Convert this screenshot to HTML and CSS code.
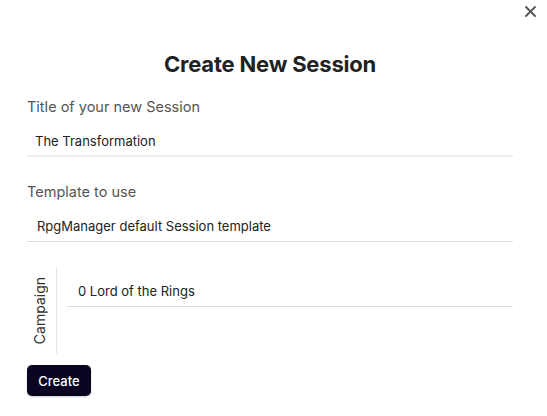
FILE: index.html
```html
<!DOCTYPE html>
<html>
<head>
<meta charset="utf-8">
<link rel="stylesheet" href="styles.css">
</head>
<body>
<div class="modal">
  <button class="close" aria-label="Close">
    <svg width="11" height="11" viewBox="0 0 11 11"><path d="M1 1L10 10M10 1L1 10" stroke="#555" stroke-width="1.8" stroke-linecap="round"/></svg>
  </button>
  <h1 class="title">Create New Session</h1>
  <div class="field">
    <label class="label">Title of your new Session</label>
    <div class="input focused">The Transformation</div>
  </div>
  <div class="field">
    <label class="label">Template to use</label>
    <div class="input select">RpgManager default Session template</div>
  </div>
  <div class="group">
    <div class="group-label"><span>Campaign</span></div>
    <div class="group-body">
      <div class="input select">0 Lord of the Rings</div>
    </div>
  </div>
  <button class="create">Create</button>
</div>
</body>
</html>
```
FILE: styles.css
```css
* { box-sizing: border-box; }
body {
  margin: 0;
  background: #fff;
  font-family: Inter, "Noto Sans", sans-serif;
  color: #222;
}
.modal {
  position: relative;
  width: 547px;
  height: 416px;
  padding: 47px 34px 0 27px;
}
.close {
  position: absolute;
  top: 6px;
  right: 11px;
  border: 0;
  background: none;
  padding: 0;
  width: 11px;
  height: 11px;
  display: flex;
}
.title {
  margin: 0 0 16px;
  text-align: center;
  font-size: 22px;
  line-height: 34px;
  font-weight: 700;
  color: #222;
  letter-spacing: -0.2px;
}
.field {
  display: flex;
  flex-direction: column;
  margin-bottom: 25px;
}
.label {
  font-size: 14.5px;
  line-height: 20px;
  color: #555;
  margin-bottom: 8px;
}
.input {
  font-size: 13px;
  line-height: 18px;
  padding: 7px 8px 6px;
  border-bottom: 1px solid #ddd;
  color: #222;
}
.input.focused {
  border-bottom: 2px solid #eee;
  padding-bottom: 5px;
}
.input.select { padding-left: 10px; }
.group {
  display: flex;
  margin-top: 2px;
  height: 87px;
}
.group-label {
  width: 30px;
  border-right: 1px solid #e8e8e8;
  display: flex;
  align-items: center;
  justify-content: center;
}
.group-label span {
  writing-mode: vertical-rl;
  transform: rotate(180deg);
  font-size: 14px;
  color: #333;
  margin-right: 4px;
}
.group-body {
  flex: 1;
  padding-left: 10px;
  padding-top: 8px;
}
.group-body .input { padding-left: 11px; }
.create {
  margin-top: 11px;
  width: 64px;
  height: 31px;
  border: 0;
  border-radius: 5px;
  background: #0b0521;
  color: #fff;
  font-family: inherit;
  font-size: 13px;
  font-weight: 500;
  padding: 0;
  box-shadow: 0 1px 2px rgba(0,0,0,0.2);
}
```
